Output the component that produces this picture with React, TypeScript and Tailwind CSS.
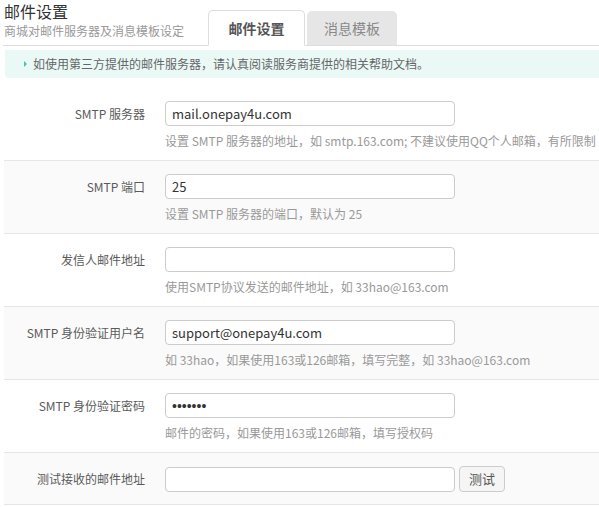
import React from "react";

type Row = {
	label: string;
	value?: string;
	type?: string;
	help?: string;
	button?: string;
};

const rows: Row[] = [
	{
		label: "SMTP 服务器",
		value: "mail.onepay4u.com",
		help: "设置 SMTP 服务器的地址，如 smtp.163.com; 不建议使用QQ个人邮箱，有所限制",
	},
	{ label: "SMTP 端口", value: "25", help: "设置 SMTP 服务器的端口，默认为 25" },
	{ label: "发信人邮件地址", value: "", help: "使用SMTP协议发送的邮件地址，如 33hao@163.com" },
	{
		label: "SMTP 身份验证用户名",
		value: "support@onepay4u.com",
		help: "如 33hao，如果使用163或126邮箱，填写完整，如 33hao@163.com",
	},
	{
		label: "SMTP 身份验证密码",
		value: "1234567",
		type: "password",
		help: "邮件的密码，如果使用163或126邮箱，填写授权码",
	},
	{ label: "测试接收的邮件地址", value: "", button: "测试" },
];

export default function App() {
	return (
		<div
			className="w-[599px] h-[507px] overflow-hidden bg-white text-[12px] text-[#555]"
			style={{ fontFamily: '"Noto Sans CJK SC", "Noto Sans", sans-serif' }}
		>
			<header className="flex items-end border-b border-[#ddd] ml-[3px] h-[46px]">
				<div className="w-[205px] pl-[1px] pb-[5px]">
					<h1 className="text-[16px] leading-[20px] text-[#333] -mt-[2px]">邮件设置</h1>
					<p className="text-[12px] leading-[18px] text-[#999] mt-[1px]">商城对邮件服务器及消息模板设定</p>
				</div>
				<nav className="flex items-end gap-[2px] -mb-px">
					<div className="w-[97px] h-[36px] flex items-center justify-center bg-white border border-[#ddd] border-b-white rounded-t-[5px] text-[14px] font-bold text-[#555]">
						邮件设置
					</div>
					<div className="w-[90px] h-[35px] flex items-center justify-center bg-[#e6e6e6] rounded-t-[5px] text-[14px] text-[#888] border-b border-[#ddd]">
						消息模板
					</div>
				</nav>
			</header>

			<div className="ml-[5px] mt-[4px] h-[28px] bg-[#eaf9f6] rounded-bl-[4px] flex items-center pl-[19px] whitespace-nowrap">
				<span className="w-0 h-0 border-y-[3px] border-y-transparent border-l-[3px] border-l-[#44c4b4] mr-[6px]" />
				<span className="text-[#666] text-[12px]">如使用第三方提供的邮件服务器，请认真阅读服务商提供的相关帮助文档。</span>
			</div>

			<div className="ml-[4px] mt-[10px]">
				{rows.map((row, i) => (
					<div
						key={row.label}
						className={`flex pt-[13px] ${row.help ? "pb-[10px]" : "pb-[12px]"} ${i > 0 ? "border-t border-[#e6e6e6]" : ""} ${i === rows.length - 1 ? "border-b border-[#e6e6e6]" : ""} ${i % 2 === 1 ? "bg-[#fafafa]" : "bg-white"}`}
					>
						<label className="w-[141px] shrink-0 h-[25px] flex items-center justify-end text-[12px] text-[#5a5a5a] whitespace-nowrap">
							{row.label}
						</label>
						<div className="ml-[20px] flex-1 min-w-0">
							<div className="flex items-center gap-[4px]">
								<input
									readOnly
									type={row.type ?? "text"}
									defaultValue={row.value}
									className={`w-[290px] h-[25px] border border-[#ccc] rounded-[4px] px-[6px] text-[13px] text-[#333] bg-white outline-none ${row.type === "password" ? "font-['Liberation_Sans'] text-[14px]" : ""}`}
								/>
								{row.button && (
									<button className="w-[46px] h-[26px] border border-[#ccc] rounded-[4px] bg-[#f5f5f5] text-[13px] text-[#555]">
										{row.button}
									</button>
								)}
							</div>
							{row.help && (
								<p className="mt-[6px] h-[18px] leading-[18px] text-[12px] text-[#999] whitespace-nowrap">{row.help}</p>
							)}
						</div>
					</div>
				))}
			</div>
		</div>
	);
}
